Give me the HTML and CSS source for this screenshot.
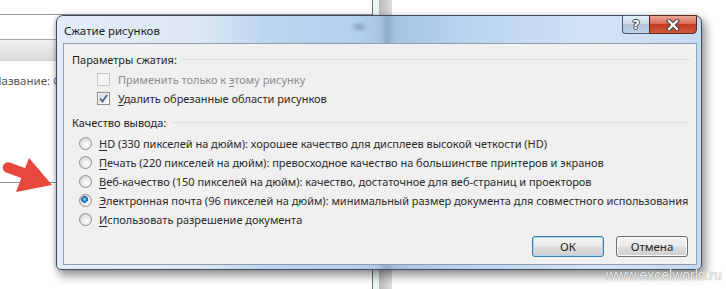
FILE: index.html
```html
<!DOCTYPE html>
<html lang="ru">
<head>
<meta charset="utf-8">
<title>Сжатие рисунков</title>
<link rel="stylesheet" href="styles.css">
</head>
<body>
<div class="screen">
  <div class="bg">
    <div class="bg-left">
      <div class="bg-row1"></div>
      <div class="bg-row2"></div>
      <div class="bg-band"></div>
      <div class="bg-body">
        <div class="bg-label">Название: <span class="bg-val">С</span></div>
        <div class="bg-line"></div>
      </div>
    </div>
    <div class="bg-split"></div>
    <div class="bg-right"></div>
  </div>

  <svg class="arrow" viewBox="0 150 60 50" width="60" height="50">
    <line x1="8" y1="167.5" x2="27" y2="174.5" stroke="#e8473b" stroke-width="10.5" stroke-linecap="round"/>
    <polygon points="29,158 52,185 16,192" fill="#e8473b"/>
  </svg>

  <div class="dialog">
    <div class="titlebar">
      <span class="title">Сжатие рисунков</span>
      <div class="caps">
        <div class="cap cap-help"><span class="qmark">?</span></div>
        <div class="cap cap-close">
          <svg width="14" height="12" viewBox="0 0 14 12">
            <path d="M3 2 L11 10 M11 2 L3 10" stroke="#3a3a3a" stroke-width="4.4" stroke-linecap="square"/>
            <path d="M3 2 L11 10 M11 2 L3 10" stroke="#ffffff" stroke-width="2.4" stroke-linecap="square"/>
          </svg>
        </div>
      </div>
    </div>
    <div class="client">
      <div class="group-head"><span>Параметры сжатия:</span><i class="sep"></i></div>
      <div class="check-list">
        <div class="row disabled"><span class="cb"></span><span>Применить только к <u>э</u>тому рисунку</span></div>
        <div class="row"><span class="cb checked"><svg width="9" height="9" viewBox="0 0 9 9"><path d="M1 4.5 L3.5 7.5 L8 1" fill="none" stroke="#4b5f95" stroke-width="1.8"/></svg></span><span><u>У</u>далить обрезанные области рисунков</span></div>
      </div>
      <div class="group-head head2"><span>Качество вывода:</span><i class="sep"></i></div>
      <div class="radio-list">
        <div class="row"><span class="rb"></span><span><u>H</u>D (330 пикселей на дюйм): хорошее качество для дисплеев высокой четкости (HD)</span></div>
        <div class="row"><span class="rb"></span><span><u>П</u>ечать (220 пикселей на дюйм): превосходное качество на большинстве принтеров и экранов</span></div>
        <div class="row"><span class="rb"></span><span><u>В</u>еб-качество (150 пикселей на дюйм): качество, достаточное для веб-страниц и проекторов</span></div>
        <div class="row"><span class="rb on"></span><span><u>Э</u>лектронная почта (96 пикселей на дюйм): минимальный размер документа для совместного использования</span></div>
        <div class="row"><span class="rb"></span><span><u>И</u>спользовать разрешение документа</span></div>
      </div>
      <div class="buttons">
        <div class="btn btn-default">ОК</div>
        <div class="btn">Отмена</div>
      </div>
    </div>
  </div>

  <div class="watermark">www.excelworld.ru</div>
</div>
</body>
</html>
```

FILE: styles.css
```css
html, body {
  margin: 0;
  padding: 0;
}
body {
  width: 726px;
  height: 289px;
  overflow: hidden;
  background: #ffffff;
  font-family: "Noto Sans", "DejaVu Sans", sans-serif;
}
.screen {
  position: relative;
  width: 726px;
  height: 289px;
  overflow: hidden;
}

/* background window */
.bg {
  display: flex;
  height: 289px;
}
.bg-left {
  width: 372px;
}
.bg-row1 {
  height: 14px;
  border-bottom: 1px solid #9c9c9c;
}
.bg-row2 {
  height: 24px;
  border-bottom: 1px solid #a8a8a8;
}
.bg-band {
  height: 20px;
  background: linear-gradient(#f2f2f2, #dadada);
  border-bottom: 1px solid #cfcfcf;
}
.bg-body {
  padding-top: 12px;
}
.bg-label {
  margin-left: -7px;
  height: 16px;
  line-height: 16px;
  font-size: 11.5px;
  color: #555555;
  white-space: nowrap;
}
.bg-val {
  color: #5a7ba6;
}
.bg-line {
  margin-top: 93px;
  width: 60px;
  height: 1px;
  background: #8c8c8c;
}
.bg-split {
  width: 20px;
  background: linear-gradient(90deg, #6f6f6f 0 1px, #eaf5f5 1px 7px, #b8b8b8 7px, #dedede 20px);
}
.bg-right {
  flex: 1;
}

.arrow {
  position: absolute;
  left: 0;
  top: 150px;
}

/* dialog */
.dialog {
  position: absolute;
  left: 56px;
  top: 15px;
  width: 646px;
  height: 255px;
  box-sizing: border-box;
  border: 1px solid #3d4b5c;
  border-radius: 7px 7px 5px 5px;
  padding: 0 4px 4px 6px;
  display: flex;
  flex-direction: column;
  background:
    radial-gradient(ellipse 10px 6px at 302px 11px, rgba(90,110,140,.45), rgba(90,110,140,0)),
    linear-gradient(90deg, #e4edf7 0, #dde8f4 140px, #bcd6f0 210px, #b3cfee 300px, #aac6e4 322px, #8fabca 330px, #a6c2e2 338px, #b7d3f0 400px, #d2e3f5 540px, #c4daf1 646px);
  box-shadow: 3px 5px 10px 1px rgba(0,0,0,.42), -1px 0 3px rgba(0,0,0,.15);
}
.titlebar {
  height: 27px;
  display: flex;
  align-items: flex-start;
  flex-shrink: 0;
}
.title {
  margin-top: 7px;
  padding-left: 1px;
  font-size: 11.5px;
  line-height: 16px;
  color: #1b1b1b;
}
.caps {
  margin-left: auto;
  margin-top: -1px;
  display: flex;
}
.cap {
  height: 19px;
  box-sizing: border-box;
  border: 1px solid #4a5a6e;
  display: flex;
  align-items: center;
  justify-content: center;
}
.cap-help {
  width: 27px;
  border-right: none;
  border-radius: 0 0 0 4px;
  background: linear-gradient(#e4edf6, #ccdae8 45%, #b3c5d8 50%, #c3d4e6);
}
.qmark {
  font-family: "DejaVu Sans", sans-serif;
  font-weight: bold;
  font-size: 13px;
  line-height: 13px;
  color: #ffffff;
  text-shadow: 1px 0 0 #3b4450, -1px 0 0 #3b4450, 0 1px 0 #3b4450, 0 -1px 0 #3b4450;
}
.cap-close {
  width: 48px;
  border-color: #5a2a22;
  border-radius: 0 0 4px 0;
  background: linear-gradient(#e8a899, #d86b55 45%, #c53c22 50%, #d2583c);
}

.client {
  flex: 1;
  border: 1px solid #8e9fb3;
  background: #f0f0f0;
  padding: 8px 6px 7px 8px;
  display: flex;
  flex-direction: column;
  font-size: 11px;
  letter-spacing: -0.02px;
  color: #2a2a2a;
}
.group-head {
  height: 16px;
  line-height: 16px;
  display: flex;
  align-items: center;
  gap: 6px;
  color: #1f1f1f;
}
.head2 {
  margin-top: 7px;
}
.sep {
  flex: 1;
  height: 1px;
  background: #d6e0e7;
  margin-bottom: 2px;
}
.check-list {
  margin-top: 2px;
  padding-left: 25px;
}
.radio-list {
  margin-top: 3px;
  padding-left: 7px;
}
.row {
  height: 19px;
  display: flex;
  align-items: center;
  white-space: nowrap;
}
.check-list .row {
  gap: 8px;
}
.radio-list .row {
  gap: 7px;
}
.row u {
  text-decoration-thickness: 1px;
  text-underline-offset: 2px;
}
.disabled {
  color: #8d8d8d;
}
.cb {
  width: 13px;
  height: 13px;
  box-sizing: border-box;
  border: 1px solid #8e8f8f;
  background: linear-gradient(135deg, #d8d8d8, #fbfbfb);
  box-shadow: inset 0 0 0 1px #f4f4f4;
  display: flex;
  align-items: center;
  justify-content: center;
  flex-shrink: 0;
}
.disabled .cb {
  border-color: #c6c6c6;
  background: #f4f4f4;
  box-shadow: none;
}
.rb {
  width: 13px;
  height: 13px;
  box-sizing: border-box;
  border-radius: 50%;
  border: 1px solid #8f8f8f;
  background: radial-gradient(circle at 60% 65%, #ffffff 0, #f0f0f0 30%, #d4d4d4 80%);
  flex-shrink: 0;
}
.rb.on {
  background:
    radial-gradient(circle at 42% 40%, #a9e4fb 0, #3a9ad6 1.6px, #1b5f9f 3.2px, rgba(27,95,159,0) 3.6px),
    radial-gradient(circle at 60% 65%, #ffffff 0, #f0f0f0 30%, #d4d4d4 80%);
}

.buttons {
  margin-top: 7px;
  display: flex;
  justify-content: flex-end;
  gap: 12px;
  padding-right: 2px;
}
.btn {
  width: 72px;
  height: 21px;
  box-sizing: border-box;
  border: 1px solid #707070;
  border-radius: 3px;
  background: linear-gradient(#f3f3f3, #ebebeb 48%, #dddddd 52%, #cfcfcf);
  box-shadow: inset 0 0 0 1px #fcfcfc;
  display: flex;
  align-items: center;
  justify-content: center;
  font-size: 11.5px;
  color: #1f1f1f;
}
.btn-default {
  border-color: #3c7fb1;
  box-shadow: inset 0 0 0 1px #a6d8f5;
}

.watermark {
  position: absolute;
  left: 606px;
  top: 267px;
  font-family: "Liberation Sans", sans-serif;
  font-size: 14px;
  line-height: 16px;
  color: rgba(255,255,255,.9);
  text-shadow: 0 0 1px rgba(0,0,0,.55);
  white-space: nowrap;
}
```
